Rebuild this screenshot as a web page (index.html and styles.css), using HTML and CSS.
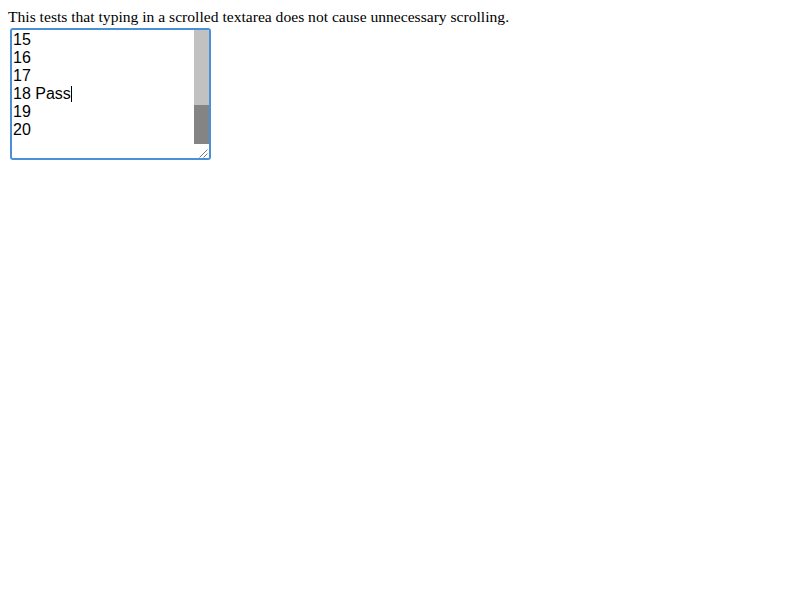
FILE: index.html
```html
<!DOCTYPE html>
<html>
<head>
<meta charset="utf-8">
<link rel="stylesheet" href="styles.css">
</head>
<body>
<p class="desc">This tests that typing in a scrolled textarea does not cause unnecessary scrolling.</p>
<div class="textarea">
  <div class="content">
    <div class="line">15</div>
    <div class="line">16</div>
    <div class="line">17</div>
    <div class="line">18 Pass<span class="caret"></span></div>
    <div class="line">19</div>
    <div class="line">20</div>
  </div>
  <div class="scrollbar">
    <div class="track"></div>
    <div class="thumb"></div>
    <div class="resizer">
      <svg width="15" height="14" viewBox="0 0 15 14">
        <line x1="13.5" y1="5.5" x2="5.5" y2="13.5" stroke="#7a7a7a" stroke-width="1"/>
        <line x1="13.5" y1="9.5" x2="9.5" y2="13.5" stroke="#7a7a7a" stroke-width="1"/>
      </svg>
    </div>
  </div>
</div>
</body>
</html>
```
FILE: styles.css
```css
html, body {
  margin: 0;
  padding: 0;
  background: #ffffff;
}
body {
  padding: 8px;
  font-family: "Liberation Serif", "Times New Roman", serif;
  font-size: 16px;
  color: #000;
}
.desc {
  margin: 0;
  font-size: 15.6px;
  line-height: 18px;
  height: 20px;
}
.textarea {
  margin-left: 2px;
  width: 201px;
  height: 132px;
  box-sizing: border-box;
  border: 2px solid #4a90d9;
  border-radius: 3px;
  display: flex;
  overflow: hidden;
  background: #fff;
}
.content {
  flex: 1;
  padding-left: 1px;
  padding-top: 1px;
  font-family: "Liberation Sans", Arial, sans-serif;
  font-size: 16px;
  line-height: 18px;
  color: #000;
}
.line {
  height: 18px;
}
.caret {
  display: inline-block;
  width: 1px;
  height: 16px;
  background: #000;
  vertical-align: -3px;
}
.scrollbar {
  width: 15px;
  display: flex;
  flex-direction: column;
}
.track {
  height: 75px;
  background: #c1c1c1;
}
.thumb {
  height: 39px;
  background: #848484;
}
.resizer {
  flex: 1;
  background: #fff;
  display: flex;
}
```
